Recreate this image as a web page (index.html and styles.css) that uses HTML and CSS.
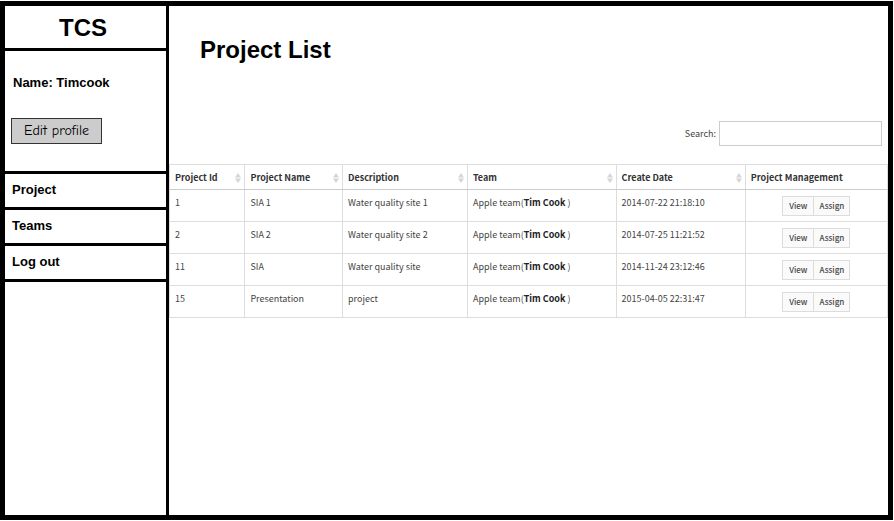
FILE: index.html
```html
<!DOCTYPE html>
<html lang="en">
<head>
<meta charset="utf-8">
<title>Project List</title>
<link rel="stylesheet" href="styles.css">
</head>
<body>
<svg class="defs" aria-hidden="true"><symbol id="sort" viewBox="0 0 6 10"><path d="M3 0L6 4.5H0zM3 10L0 5.5H6z"/></symbol></svg>
<div class="frame">
  <aside class="sidebar">
    <div class="brand">TCS</div>
    <div class="profile">
      <p class="name">Name: Timcook</p>
      <button class="edit" type="button">Edit profile</button>
    </div>
    <nav class="nav">
      <a href="#project">Project</a>
      <a href="#teams">Teams</a>
      <a href="#logout">Log out</a>
    </nav>
  </aside>
  <main class="main">
    <h1>Project List</h1>
    <div class="search">
      <label for="search">Search:</label>
      <input id="search" type="text">
    </div>
    <table>
      <colgroup><col class="c-id"><col class="c-name"><col class="c-desc"><col class="c-team"><col class="c-date"><col class="c-manage"></colgroup>
      <thead>
        <tr>
          <th><div class="head">Project Id<svg class="sort"><use href="#sort"/></svg></div></th>
          <th><div class="head">Project Name<svg class="sort"><use href="#sort"/></svg></div></th>
          <th><div class="head">Description<svg class="sort"><use href="#sort"/></svg></div></th>
          <th><div class="head">Team<svg class="sort"><use href="#sort"/></svg></div></th>
          <th><div class="head">Create Date<svg class="sort"><use href="#sort"/></svg></div></th>
          <th><div class="head">Project Management</div></th>
        </tr>
      </thead>
      <tbody>
        <tr><td>1</td><td>SIA 1</td><td>Water quality site 1</td><td>Apple team(<b>Tim Cook</b> )</td><td>2014-07-22 21:18:10</td><td><div class="actions"><button type="button">View</button><button type="button">Assign</button></div></td></tr>
        <tr><td>2</td><td>SIA 2</td><td>Water quality site 2</td><td>Apple team(<b>Tim Cook</b> )</td><td>2014-07-25 11:21:52</td><td><div class="actions"><button type="button">View</button><button type="button">Assign</button></div></td></tr>
        <tr><td>11</td><td>SIA</td><td>Water quality site</td><td>Apple team(<b>Tim Cook</b> )</td><td>2014-11-24 23:12:46</td><td><div class="actions"><button type="button">View</button><button type="button">Assign</button></div></td></tr>
        <tr><td>15</td><td>Presentation</td><td>project</td><td>Apple team(<b>Tim Cook</b> )</td><td>2015-04-05 22:31:47</td><td><div class="actions"><button type="button">View</button><button type="button">Assign</button></div></td></tr>
      </tbody>
    </table>
  </main>
</div>
</body>
</html>
```
FILE: styles.css
```css
* { box-sizing: border-box; }
body {
  margin: 0;
  padding: 1px 1px 1px 0;
  min-height: 100vh;
  display: flex;
  background: #fff;
  color: #000;
  font-family: "Liberation Sans", Arial, sans-serif;
}
.defs { position: absolute; width: 0; height: 0; }
.frame {
  flex: 1;
  display: grid;
  grid-template-columns: 164px minmax(0, 1fr);
  border: 5px solid #000;
}
.sidebar { border-right: 3px solid #000; }
.brand {
  padding: 8px 5px 6px 0;
  border-bottom: 3px solid #000;
  font-size: 24px;
  font-weight: bold;
  line-height: 28px;
  text-align: center;
}
.profile {
  padding: 22px 6px 27px;
  border-bottom: 3px solid #000;
}
.name {
  margin: 0 0 25px;
  padding-left: 2px;
  font-size: 13px;
  font-weight: bold;
  line-height: 20px;
}
.edit {
  display: block;
  height: 26px;
  padding: 0 12px;
  border: 1px solid #333;
  background: #ccc;
  color: #000;
  font: 14px/24px "Comic Neue", "Comic Sans MS", "Noto Sans CJK SC", sans-serif;
}
.nav a {
  display: block;
  padding: 5px 7px 7px;
  border-bottom: 3px solid #000;
  color: #000;
  font-size: 13px;
  font-weight: bold;
  line-height: 21px;
  text-decoration: none;
}
.main {
  font-family: "Noto Sans CJK SC", sans-serif;
  font-size: 9px;
  color: #444;
}
h1 {
  margin: 29px 0 57px 31px;
  color: #000;
  font: bold 24px/29px "Liberation Sans", Arial, sans-serif;
}
.search {
  display: flex;
  justify-content: flex-end;
  align-items: center;
  gap: 3px;
  padding-right: 6px;
  margin-bottom: 18px;
}
.search input {
  width: 163px;
  height: 25px;
  padding: 0 6px;
  border: 1px solid #ccc;
  background: #fff;
  font: inherit;
}
table {
  width: 100%;
  table-layout: fixed;
  border-collapse: collapse;
  border: 1px solid #ddd;
}
.c-id { width: 10.5%; }
.c-name { width: 13.6%; }
.c-desc { width: 17.4%; }
.c-team { width: 20.7%; }
.c-date { width: 18%; }
th, td {
  padding: 6px 5px 5px;
  border: 1px solid #ddd;
  line-height: 13px;
  text-align: left;
  vertical-align: top;
  white-space: nowrap;
}
th { border-bottom-color: #ccc; color: #333; }
td { height: 32px; }
td b { color: #222; }
.head { display: flex; justify-content: space-between; align-items: center; }
.sort { width: 6px; height: 10px; margin-right: -2px; fill: #d5d5d5; }
.actions { display: flex; justify-content: center; }
.actions button {
  width: 32px;
  height: 20px;
  padding: 0;
  border: 1px solid #ddd;
  background: #fafafa;
  color: #444;
  font: 500 8px/18px "Noto Sans CJK SC", sans-serif;
}
.actions button + button { width: 37px; margin-left: -1px; }
```
